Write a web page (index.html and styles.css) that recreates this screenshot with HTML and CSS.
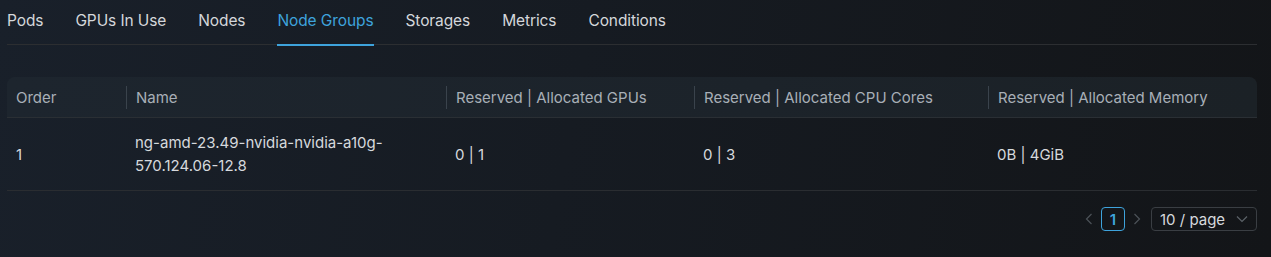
FILE: index.html
```html
<!DOCTYPE html>
<html>
<head>
<meta charset="utf-8">
<link rel="stylesheet" href="styles.css">
</head>
<body>
<div class="page">
  <nav class="tabs">
    <div class="tab">Pods</div>
    <div class="tab">GPUs In Use</div>
    <div class="tab">Nodes</div>
    <div class="tab active">Node Groups</div>
    <div class="tab">Storages</div>
    <div class="tab">Metrics</div>
    <div class="tab">Conditions</div>
  </nav>
  <div class="table">
    <div class="thead">
      <div class="th c1">Order</div>
      <div class="th c2">Name</div>
      <div class="th c3">Reserved | Allocated GPUs</div>
      <div class="th c4">Reserved | Allocated CPU Cores</div>
      <div class="th c5">Reserved | Allocated Memory</div>
    </div>
    <div class="trow">
      <div class="td c1">1</div>
      <div class="td c2">ng-amd-23.49-nvidia-nvidia-a10g-570.124.06-12.8</div>
      <div class="td c3">0 | 1</div>
      <div class="td c4">0 | 3</div>
      <div class="td c5">0B | 4GiB</div>
    </div>
  </div>
  <div class="pager">
    <span class="arrow"><svg width="8" height="12" viewBox="0 0 8 12"><path d="M6.5 1 L1.5 6 L6.5 11" fill="none" stroke="currentColor" stroke-width="1.2"/></svg></span>
    <span class="pnum">1</span>
    <span class="arrow"><svg width="8" height="12" viewBox="0 0 8 12"><path d="M1.5 1 L6.5 6 L1.5 11" fill="none" stroke="currentColor" stroke-width="1.2"/></svg></span>
    <div class="select">
      <span>10 / page</span>
      <svg width="12" height="8" viewBox="0 0 12 8"><path d="M1 1.5 L6 6.5 L11 1.5" fill="none" stroke="currentColor" stroke-width="1.2"/></svg>
    </div>
  </div>
</div>
</body>
</html>
```

FILE: styles.css
```css
html, body {
  margin: 0;
  padding: 0;
  height: 100%;
}
body {
  background: linear-gradient(100deg, #19202a 0%, #161b22 45%, #131518 100%);
  font-family: Inter, "Noto Sans", sans-serif;
  color: #d6d9dd;
}
.page {
  padding: 0 14px 0 7px;
}
.tabs {
  display: flex;
  gap: 32px;
  height: 44px;
  border-bottom: 1px solid #2c2e31;
}
.tab {
  font-size: 15.5px;
  line-height: 20px;
  padding-top: 11px;
  height: 33px;
  color: #d4d7db;
  letter-spacing: -0.1px;
}
.tab.active {
  color: #3ea3dc;
  border-bottom: 2px solid #3ea3dc;
}
.table {
  margin-top: 32px;
}
.thead {
  display: flex;
  height: 40px;
  align-items: center;
  background: linear-gradient(90deg, #1d252e 0%, #1c232a 60%, #1b2126 100%);
  border-radius: 8px 8px 0 0;
  border-bottom: 1px solid #2a2f34;
}
.th {
  font-size: 15px;
  color: #a8afb7;
  padding-left: 9px;
  box-sizing: border-box;
}
.th + .th {
  border-left: 1px solid #3a434c;
  line-height: 23px;
}
.c1 { width: 119px; }
.c2 { width: 320px; }
.c3 { width: 248px; }
.c4 { width: 294px; }
.c5 { flex: 1; }
.trow {
  display: flex;
  align-items: center;
  height: 72px;
  border-bottom: 1px solid #2a2d31;
}
.td {
  font-size: 15px;
  line-height: 23px;
  color: #d6d9dd;
  padding-left: 9px;
  box-sizing: border-box;
}
.td.c2 {
  padding-right: 50px;
}
.pager {
  display: flex;
  justify-content: flex-end;
  align-items: center;
  margin-top: 16px;
}
.arrow {
  display: flex;
  align-items: center;
  justify-content: center;
  width: 8px;
  color: #4c5258;
}
.pnum {
  width: 24px;
  height: 24px;
  box-sizing: border-box;
  border: 1px solid #3ea3dc;
  border-radius: 4px;
  color: #3ea3dc;
  font-size: 15px;
  font-weight: 600;
  display: flex;
  align-items: center;
  justify-content: center;
  margin: 0 8px;
}
.select {
  margin-left: 10px;
  width: 106px;
  height: 24px;
  box-sizing: border-box;
  border: 1px solid #3a3e43;
  border-radius: 4px;
  display: flex;
  align-items: center;
  justify-content: space-between;
  padding: 0 8px;
  font-size: 15px;
  color: #d6d9dd;
}
.select svg {
  color: #5c6268;
}
```
